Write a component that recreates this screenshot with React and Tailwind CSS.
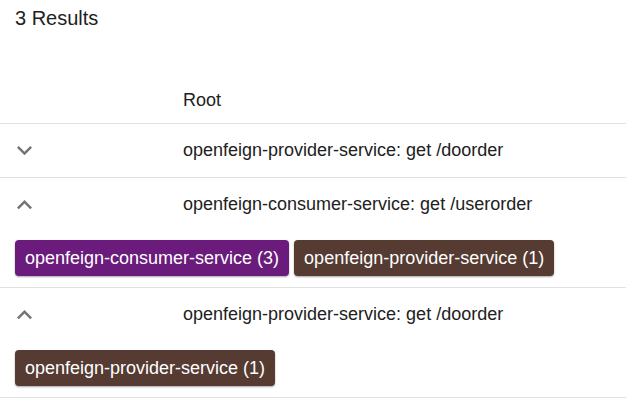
import React from 'react';

const Chevron = ({ up }) => (
  <svg width="15" height="9.3" viewBox="6 8.59 12 7.41" className="text-[#757575]" fill="currentColor">
    {up ? (
      <path d="M7.41 15.41 12 10.83l4.59 4.58L18 14l-6-6-6 6z" transform="translate(0 0.59)" />
    ) : (
      <path d="M16.59 8.59 12 13.17 7.41 8.59 6 10l6 6 6-6z" />
    )}
  </svg>
);

const Chip = ({ label, color }) => (
  <div
    className={`h-[36px] px-[10px] flex items-center rounded-[4px] text-white text-[18px] shadow-[0_1px_2px_rgba(0,0,0,0.35)] ${color}`}
  >
    {label}
  </div>
);

const App = () => {
  const rows = [
    { title: 'openfeign-provider-service: get /doorder', open: false, chips: [] },
    {
      title: 'openfeign-consumer-service: get /userorder',
      open: true,
      chips: [
        { label: 'openfeign-consumer-service (3)', color: 'bg-[#6a1b7b]' },
        { label: 'openfeign-provider-service (1)', color: 'bg-[#553b31]' },
      ],
    },
    {
      title: 'openfeign-provider-service: get /doorder',
      open: true,
      chips: [{ label: 'openfeign-provider-service (1)', color: 'bg-[#553b31]' }],
    },
  ];

  return (
    <div className="w-[626px] h-[417px] bg-white text-[#212121] font-['Liberation_Sans',Arial,sans-serif] overflow-hidden">
      <div className="px-[15px] pt-[4px] h-[28px] leading-[28px] text-[20px] box-content">3 Results</div>
      <div className="mt-[45px] h-[47px] flex items-center border-b border-[#e0e0e0] text-[18px]">
        <div className="w-[183px]" />
        <span>Root</span>
      </div>
      {rows.map((row, idx) => (
        <div key={idx} className="border-b border-[#e0e0e0]">
          <div className="h-[53px] flex items-center text-[18px]">
            <div className="w-[183px] pl-[17px] flex items-center">
              <Chevron up={row.open} />
            </div>
            <span>{row.title}</span>
          </div>
          {row.chips.length > 0 && (
            <div className="flex gap-[5px] px-[15px] mt-[9px] pb-[11px]">
              {row.chips.map((c, cIdx) => (
                <Chip key={cIdx} label={c.label} color={c.color} />
              ))}
            </div>
          )}
        </div>
      ))}
    </div>
  );
};

export default App;
